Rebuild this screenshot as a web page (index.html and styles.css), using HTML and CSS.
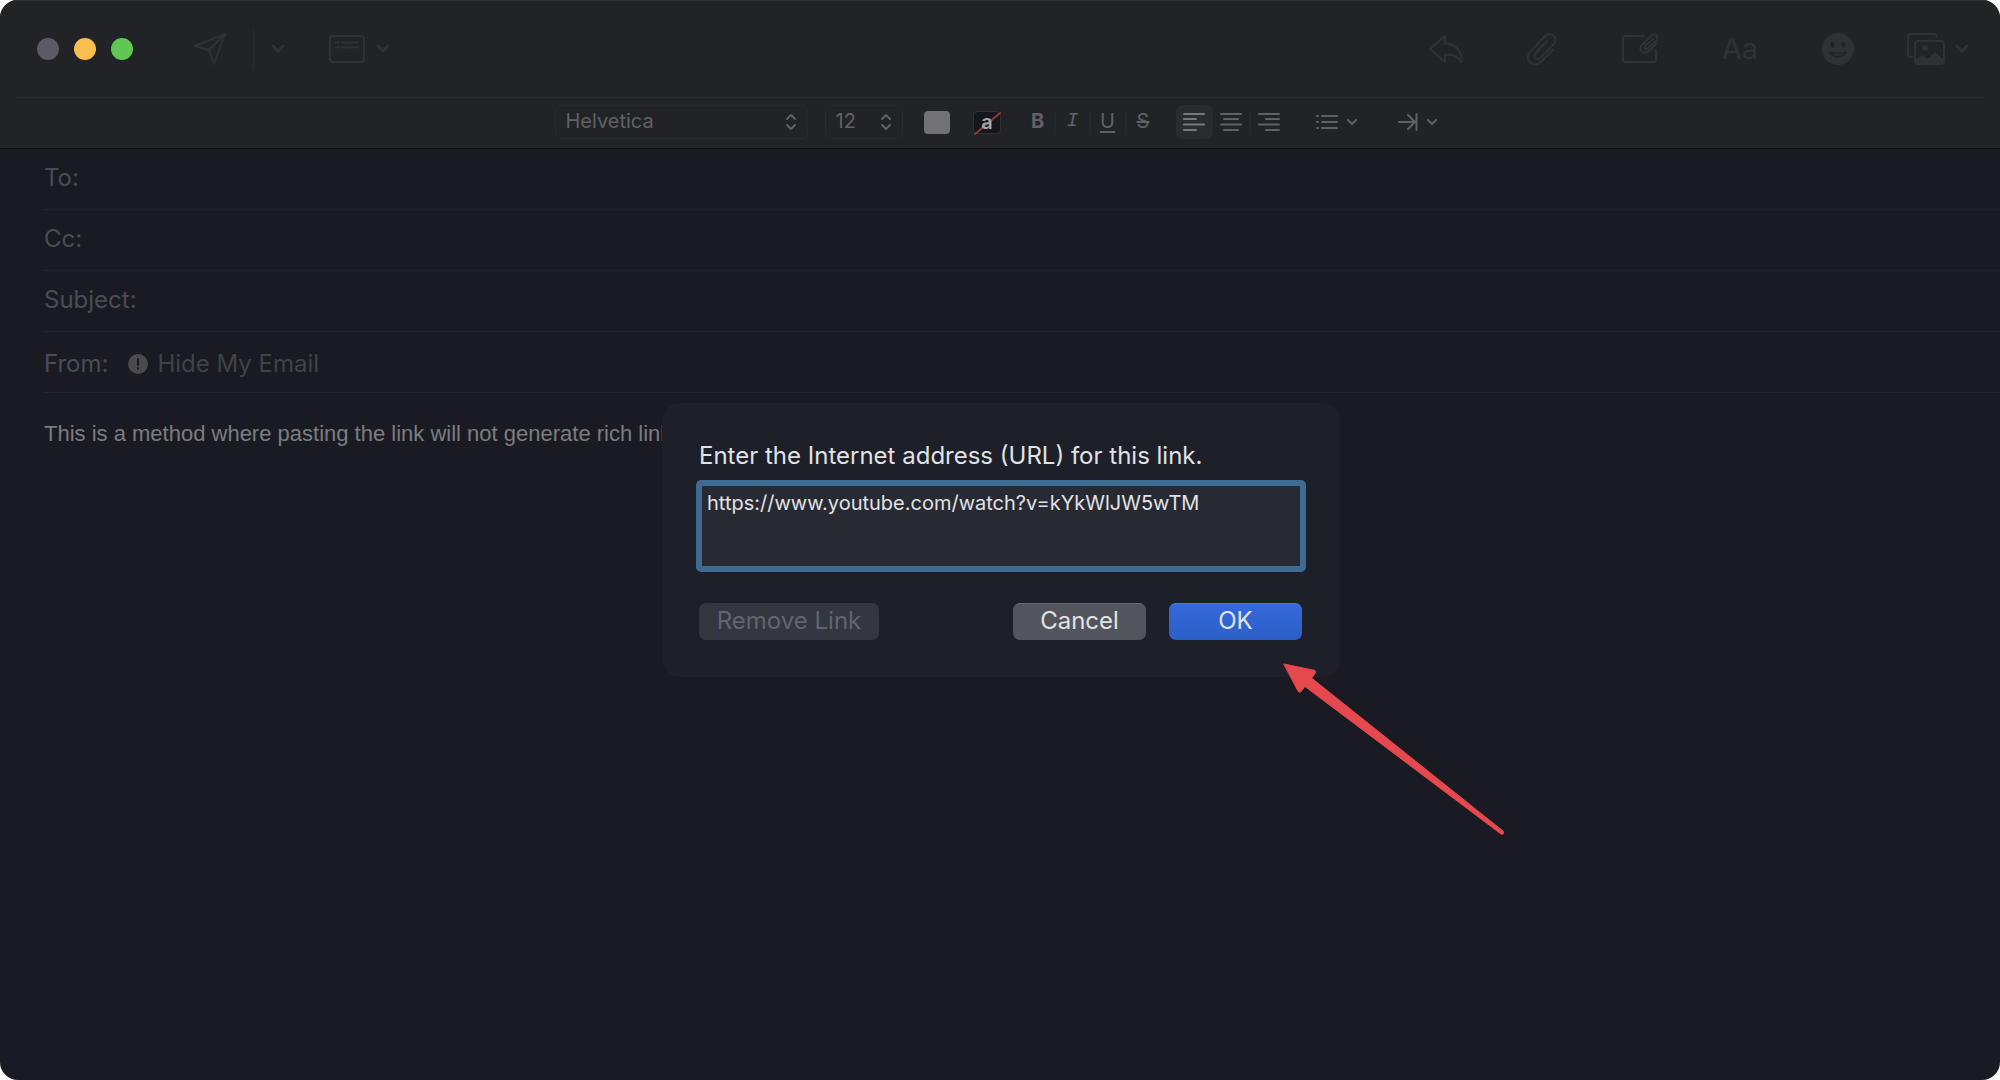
FILE: index.html
```html
<!DOCTYPE html>
<html lang="en">
<head>
<meta charset="utf-8">
<title>New Message</title>
<link rel="stylesheet" href="styles.css">
</head>
<body>
<main class="window">
  <header class="header">
    <div class="toolbar">
      <div class="lights">
        <button class="light" aria-label="Close"></button>
        <button class="light light-min" aria-label="Minimize"></button>
        <button class="light light-max" aria-label="Zoom"></button>
      </div>
      <div class="send-group">
        <button class="tool" aria-label="Send"><svg width="34" height="34" viewBox="0 0 34 34"><path d="M2 14 32 2 21 32 16 18ZM16 18 32 2"/></svg></button>
        <span class="divider"></span>
        <button class="tool" aria-label="Send options"><svg width="14" height="10" viewBox="0 0 14 10"><path class="bold" d="m2 2 5 5 5-5"/></svg></button>
      </div>
      <button class="tool tool-header" aria-label="Header fields">
        <svg width="36" height="30" viewBox="0 0 36 30"><rect x="1" y="2" width="34" height="26" rx="3"/><path d="M7 8.500h3M13 8.500h16M7 13.500h3M13 13.500h16"/></svg>
        <svg width="14" height="10" viewBox="0 0 14 10"><path class="bold" d="m2 2 5 5 5-5"/></svg>
      </button>
      <div class="tools-right">
        <button class="tool" aria-label="Reply"><svg width="34" height="30" viewBox="0 0 34 30"><path d="M16 2 1 15 16 28V21C24 20 29 22 32 28 34 17 27 10 16 9.500Z"/></svg></button>
        <button class="tool" aria-label="Attach file"><svg width="32" height="34" viewBox="0 0 32 34"><path d="M27 17.500 15 30C11 34 5 33 3 29 1 26 1.500 23 4 20L18 5C21 2 25 1 28 4 31 7 29 11 27 13L14 26C12 28 9 27 8.500 25 8 23 9 22 10 21L21 9"/></svg></button>
        <button class="tool" aria-label="Insert link"><svg width="38" height="32" viewBox="0 0 38 32"><path d="M23 3H4Q2 3 2 5V27Q2 29 4 29H33Q35 29 35 27V17"/><path d="M35 11 28 18C25 20 22 20 20 18 19 16 19 14 21 12L30 3C32 1 34 1 36 3 37 5 37 6 35 8L27 15Q25 17 24 15 23.500 14 25 12L32 6"/></svg></button>
        <button class="tool tool-text" aria-label="Show format bar">Aa</button>
        <button class="tool" aria-label="Emoji"><svg class="solid" width="34" height="34" viewBox="0 0 34 34"><path fill-rule="evenodd" d="M17 1a16 16 0 1 1 0 32 16 16 0 0 1 0-32ZM11.500 9.500a2 3 0 1 0 0 6 2 3 0 0 0 0-6ZM22.500 9.500a2 3 0 1 0 0 6 2 3 0 0 0 0-6ZM8 19c1 9 17 9 18 0-5 2-13 2-18 0ZM11 21.500c4 1 8 1 12 0-2 3-10 3-12 0Z"/></svg></button>
        <button class="tool tool-photo" aria-label="Photos">
          <svg width="40" height="34" viewBox="0 0 40 34"><path d="M7 25H5Q2 25 2 22V5Q2 2 5 2H27Q31 2 31 5"/><rect x="9" y="9" width="29" height="23" rx="3"/><circle class="dot" cx="19" cy="16" r="3"/><path class="fill" d="M10 32V27L16 23 21 27 29 20 37 27V32Z"/></svg>
          <svg width="14" height="10" viewBox="0 0 14 10"><path class="bold" d="m2 2 5 5 5-5"/></svg>
        </button>
      </div>
    </div>
    <div class="format-bar">
      <div class="picker picker-font">
        <select aria-label="Font"><option>Helvetica</option></select>
        <svg width="12" height="18" viewBox="0 0 12 18"><path d="m2 6 4-4 4 4M2 12l4 4 4-4"/></svg>
      </div>
      <div class="picker picker-size">
        <select aria-label="Font size"><option>12</option></select>
        <svg width="12" height="18" viewBox="0 0 12 18"><path d="m2 6 4-4 4 4M2 12l4 4 4-4"/></svg>
      </div>
      <button class="swatch" aria-label="Text color"></button>
      <button class="swatch swatch-none" aria-label="Background color"><svg width="27" height="23" viewBox="0 0 27 23"><path d="M1 22 26 1"/></svg><span>a</span></button>
      <div class="styles">
        <button class="style style-b" aria-label="Bold">B</button>
        <button class="style style-i" aria-label="Italic">I</button>
        <button class="style style-u" aria-label="Underline">U</button>
        <button class="style style-s" aria-label="Strikethrough">S</button>
      </div>
      <div class="aligns">
        <button class="align active" aria-label="Align left"><svg width="22" height="20" viewBox="0 0 22 20"><path d="M1 2h20M1 7h12M1 12.500h20M1 18h12"/></svg></button>
        <button class="align" aria-label="Align center"><svg width="22" height="20" viewBox="0 0 22 20"><path d="M1 2h20M4 7h14M1 12.500h20M4 18h14"/></svg></button>
        <button class="align align-last" aria-label="Align right"><svg width="22" height="20" viewBox="0 0 22 20"><path d="M1 2h20M8 7h13M1 12.500h20M8 18h13"/></svg></button>
      </div>
      <button class="menu" aria-label="List">
        <svg width="22" height="18" viewBox="0 0 22 18"><path d="M6 3h15M6 9h15M6 15h15M1 3h1M1 9h1M1 15h1"/></svg>
        <svg width="10" height="8" viewBox="0 0 10 8"><path d="m1 2 4 4 4-4"/></svg>
      </button>
      <button class="menu" aria-label="Indent">
        <svg width="20" height="18" viewBox="0 0 20 18"><path d="M1 9h15M10 2l7 7-7 7M18.500 1v16"/></svg>
        <svg width="10" height="8" viewBox="0 0 10 8"><path d="m1 2 4 4 4-4"/></svg>
      </button>
    </div>
  </header>

  <form class="fields">
    <div class="field"><label for="to">To:</label><input id="to" type="text"></div>
    <div class="field"><label for="cc">Cc:</label><input id="cc" type="text"></div>
    <div class="field"><label for="subject">Subject:</label><input id="subject" type="text"></div>
    <div class="field field-from"><label for="from">From:</label>
      <button class="from" id="from" type="button"><svg width="20" height="20" viewBox="0 0 20 20"><circle cx="10" cy="10" r="10"/><path d="M10 5v6M10 14v1"/></svg>Hide My Email</button>
    </div>
  </form>
  <div class="message" contenteditable="true" role="textbox" aria-label="Message">This is a method where pasting the link will not generate rich links</div>

  <section class="dialog" role="dialog" aria-labelledby="url-label">
    <label class="dialog-title" id="url-label" for="url">Enter the Internet address (URL) for this link.</label>
    <textarea class="url" id="url" spellcheck="false">https://www.youtube.com/watch?v=kYkWlJW5wTM</textarea>
    <div class="actions">
      <button class="btn btn-remove" disabled>Remove Link</button>
      <button class="btn btn-cancel">Cancel</button>
      <button class="btn btn-ok">OK</button>
    </div>
    <svg class="arrow" width="224" height="176" viewBox="0 0 224 176"><path d="M3 3 34 9.500Q36 11 30.500 17L222 170Q224 174 220 173L24 25.500 19.500 31Q18 32 17 30Z"/></svg>
  </section>
</main>
</body>
</html>
```
FILE: styles.css
```css
* { box-sizing: border-box; }

body {
  margin: 0;
  background: #fff;
  font-family: Inter, "Liberation Sans", sans-serif;
}

button, input, select, textarea {
  margin: 0;
  padding: 0;
  border: 0;
  outline: 0;
  background: none;
  color: inherit;
  font: inherit;
}

svg {
  display: block;
  flex: none;
  fill: none;
  stroke: currentColor;
  stroke-width: 2;
  stroke-linecap: round;
  stroke-linejoin: round;
}

.bold { stroke-width: 3; }

.window {
  position: relative;
  min-height: 100vh;
  overflow: hidden;
  border-radius: 18px;
  background: #1a1b22;
}

.header {
  border-top: 1px solid #303136;
  border-bottom: 1px solid #101115;
  background: #222327;
}

/* Main toolbar */
.toolbar {
  display: flex;
  align-items: center;
  height: 97px;
  margin: 0 15px;
  padding: 0 16px 1px 22px;
  border-bottom: 1px solid #292a2e;
  color: #303136;
}

.lights { display: flex; gap: 15px; }

.light {
  width: 22px;
  height: 22px;
  border-radius: 50%;
  background: #5c5b64;
}

.light-min { background: #f7be50; }
.light-max { background: #60c654; }

.tool {
  display: flex;
  align-items: center;
  gap: 11px;
}

.send-group {
  display: flex;
  align-items: center;
  margin-left: 60px;
}

.divider {
  width: 1px;
  height: 40px;
  margin: 0 17px 0 26px;
  background: #2a2b2f;
}

.tool-header { margin-left: 44px; }

.tools-right {
  display: flex;
  align-items: center;
  gap: 63px;
  margin-left: auto;
}

.tool-text { font-size: 29px; line-height: 36px; }

.tool-photo { gap: 9px; margin-left: -12px; }

.solid, .dot, .fill { fill: currentColor; stroke: none; }

/* Formatting bar */
.format-bar {
  display: flex;
  align-items: center;
  justify-content: center;
  height: 50px;
  padding: 0 9px 2px 0;
  color: #606165;
}

.picker {
  display: flex;
  align-items: center;
  height: 34px;
  padding-right: 10px;
  border: 1px solid #2a2b2f;
  border-radius: 7px;
}

.picker select {
  flex: 1;
  min-width: 0;
  padding: 0 0 2px 10px;
  appearance: none;
  font-size: 20px;
  line-height: 28px;
}

.picker-font { width: 253px; }
.picker-size { width: 78px; margin-left: 17px; }

.swatch {
  width: 26px;
  height: 23px;
  margin-left: 21px;
  border-radius: 4px;
  background: #727275;
}

.swatch-none {
  display: grid;
  place-items: center;
  width: 28px;
  margin-left: 23px;
  border: 1px solid #303136;
  background: #15161a;
  color: #a5a5a7;
  font-size: 20px;
  font-weight: 600;
  line-height: 20px;
}

.swatch-none svg, .swatch-none span { grid-area: 1 / 1; }
.swatch-none span { padding-bottom: 2px; }
.swatch-none svg { color: #8e3c33; }

.styles { display: flex; margin-left: 20px; }

.style {
  width: 35px;
  height: 24px;
  padding-bottom: 2px;
  border-right: 1px solid #28292d;
  font-size: 20px;
  line-height: 22px;
}

.style-b { font-weight: 700; }
.style-i { font-family: "Liberation Mono", monospace; font-style: italic; }
.style-u { text-decoration: underline; text-underline-offset: 3px; }
.style-s { border-right: 0; text-decoration: line-through; }

.aligns { display: flex; align-items: center; margin-left: 15px; }

.align {
  display: flex;
  align-items: center;
  justify-content: center;
  width: 37px;
  height: 34px;
  border-radius: 7px;
}

.active { background: #2a2b2f; color: #77787b; }

.align-last {
  height: 24px;
  border-left: 1px solid #28292d;
  border-radius: 0;
}

.menu {
  display: flex;
  align-items: center;
  gap: 9px;
  margin-left: 29px;
}

.menu + .menu { margin-left: 41px; }

/* Address fields */
.fields {
  padding-left: 44px;
  color: #4b4c53;
  font-size: 24px;
  line-height: 28px;
}

.field {
  display: flex;
  align-items: center;
  gap: 20px;
  height: 61px;
  padding-bottom: 3px;
  border-bottom: 1px solid #23242b;
}

.field input { flex: 1; }

.field-from { padding: 4px 0 0; }

.from {
  display: flex;
  align-items: center;
  gap: 9px;
  color: #414146;
}

.from circle { fill: #4b4b4d; stroke: none; }
.from path { stroke: #1a1b22; }

.message {
  padding: 28px 44px;
  outline: 0;
  color: #7c7c80;
  font-family: "Liberation Sans", sans-serif;
  font-size: 22px;
  line-height: 26px;
}

/* Link dialog */
.dialog {
  position: absolute;
  top: 403px;
  left: 50%;
  width: 678px;
  margin-left: -338px;
  padding: 38px 34px 37px;
  border-radius: 18px;
  background: #1d1f29;
  color: #e1e2e5;
}

.dialog-title {
  display: block;
  padding-left: 3px;
  font-size: 24px;
  line-height: 30px;
}

.url {
  display: block;
  width: 100%;
  height: 92px;
  margin-top: 9px;
  padding: 5px;
  border: 6px solid #3e6b92;
  border-radius: 5px;
  background: #282a33;
  font-size: 20px;
  line-height: 24px;
  resize: none;
}

.actions {
  display: flex;
  gap: 23px;
  margin-top: 31px;
  padding: 0 4px 0 3px;
}

.btn {
  width: 133px;
  height: 37px;
  padding-bottom: 2px;
  border-radius: 7px;
  font-size: 24px;
  line-height: 34px;
}

.btn-remove {
  width: 180px;
  margin-right: auto;
  background: #343640;
  color: #63656d;
}

.btn-cancel { border-top: 1px solid #66686e; background: #53555c; }

.btn-ok {
  border-top: 1px solid #4d7de2;
  background: linear-gradient(#3468dc, #2e5fc7);
}

.arrow {
  position: absolute;
  top: 258px;
  left: 619px;
  color: #e5484d;
}

.arrow path { fill: currentColor; stroke-width: 1; }
```
